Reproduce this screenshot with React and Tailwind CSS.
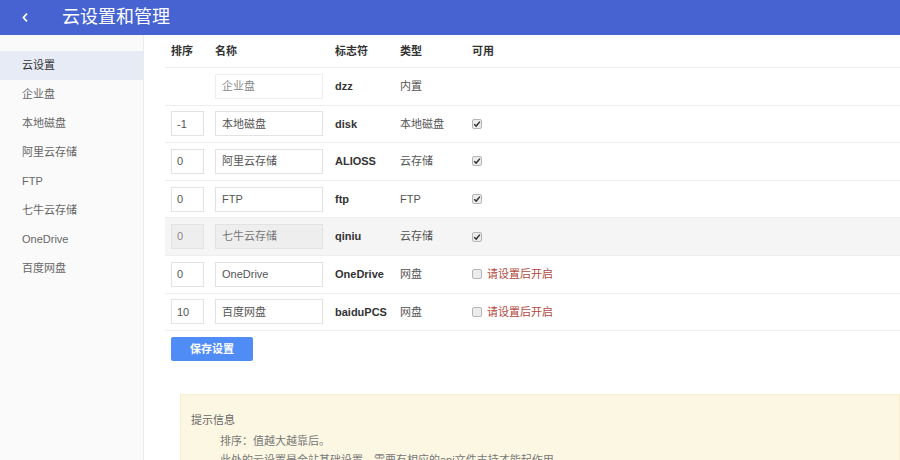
import React from 'react';

const font = { fontFamily: '"Liberation Sans", "Noto Sans CJK SC", sans-serif' };

const menu = ['云设置', '企业盘', '本地磁盘', '阿里云存储', 'FTP', '七牛云存储', 'OneDrive', '百度网盘'];

const rows = [
  { sort: null, name: '企业盘', id: 'dzz', type: '内置', on: null },
  { sort: '-1', name: '本地磁盘', id: 'disk', type: '本地磁盘', on: true },
  { sort: '0', name: '阿里云存储', id: 'ALIOSS', type: '云存储', on: true },
  { sort: '0', name: 'FTP', id: 'ftp', type: 'FTP', on: true },
  { sort: '0', name: '七牛云存储', id: 'qiniu', type: '云存储', on: true, off: true },
  { sort: '0', name: 'OneDrive', id: 'OneDrive', type: '网盘', on: false },
  { sort: '10', name: '百度网盘', id: 'baiduPCS', type: '网盘', on: false },
];

function Check({ checked }) {
  return (
    <span className="inline-flex w-[10px] h-[10px] items-center justify-center rounded-[2px] border border-[#b5b5b5] bg-[#ececec]">
      {checked && (
        <svg viewBox="0 0 10 10" className="w-[8px] h-[8px]">
          <path d="M1.5 5.2 L4 7.6 L8.6 2" stroke="#333" strokeWidth="1.8" fill="none" />
        </svg>
      )}
    </span>
  );
}

export default function App() {
  return (
    <div className="w-[900px] h-[460px] overflow-hidden bg-white text-[11px] text-[#555]" style={font}>
      <div className="h-[35px] bg-[#4763d2] flex items-center text-white">
        <svg viewBox="0 0 10 14" className="w-[8px] h-[11px] ml-[21px]">
          <path d="M7.5 2 L3 7 L7.5 12" stroke="#fff" strokeWidth="2.2" fill="none" />
        </svg>
        <span className="ml-[33px] text-[18px]">云设置和管理</span>
      </div>
      <div className="flex h-[425px]">
        <div className="w-[144px] shrink-0 bg-[#fafafa] border-r border-[#ebebeb] pt-[16px]">
          {menu.map((m, i) => (
            <div
              key={m}
              className={`h-[29px] flex items-center pl-[22px] ${i === 0 ? 'bg-[#e6ebf6] text-[#333]' : 'text-[#666]'}`}
            >
              {m}
            </div>
          ))}
        </div>
        <div className="flex-1 pl-[21px]">
          <div className="grid grid-cols-[50px_120px_65px_72px_1fr] h-[33px] items-center border-b border-[#eeeeee] font-bold text-[#333]">
            <div className="pl-[6px]">排序</div>
            <div>名称</div>
            <div>标志符</div>
            <div>类型</div>
            <div>可用</div>
          </div>
          {rows.map((r) => (
            <div
              key={r.id}
              className={`grid grid-cols-[50px_120px_65px_72px_1fr] h-[37.6px] items-center border-b border-[#eeeeee] ${r.off ? 'bg-[#f5f5f5]' : ''}`}
            >
              <div className="pl-[6px]">
                {r.sort !== null && (
                  <div className={`w-[33px] h-[25px] border border-[#e2e2e2] flex items-center pl-[5px] ${r.off ? 'bg-[#eeeeee] text-[#888]' : 'bg-white'}`}>
                    {r.sort}
                  </div>
                )}
              </div>
              <div>
                <div
                  className={`w-[108px] h-[25px] border flex items-center pl-[6px] ${r.off ? 'bg-[#eeeeee] border-[#e2e2e2] text-[#777]' : r.sort === null ? 'border-[#eeeeee] text-[#888] bg-white' : 'border-[#e2e2e2] bg-white'}`}
                >
                  {r.name}
                </div>
              </div>
              <div className="font-bold text-[#333]">{r.id}</div>
              <div>{r.type}</div>
              <div className="flex items-center">
                {r.on !== null && <Check checked={r.on} />}
                {r.on === false && <span className="ml-[5px] text-[#b5473c]">请设置后开启</span>}
              </div>
            </div>
          ))}
          <button className="mt-[6px] ml-[6px] w-[82px] h-[24px] rounded-[2px] bg-[#4f8cf6] text-white font-bold text-[11px]">
            保存设置
          </button>
          <div className="mt-[33px] ml-[15px] bg-[#fcf7e3] border border-[#f8eed0] pt-[17px] pl-[10px] h-[80px]">
            <div className="text-[#666]">提示信息</div>
            <div className="pl-[29px] mt-[3px] leading-[19px] text-[#777]">
              <div>排序：值越大越靠后。</div>
              <div>此处的云设置是全站基础设置，需要有相应的api文件支持才能起作用</div>
            </div>
          </div>
        </div>
      </div>
    </div>
  );
}
